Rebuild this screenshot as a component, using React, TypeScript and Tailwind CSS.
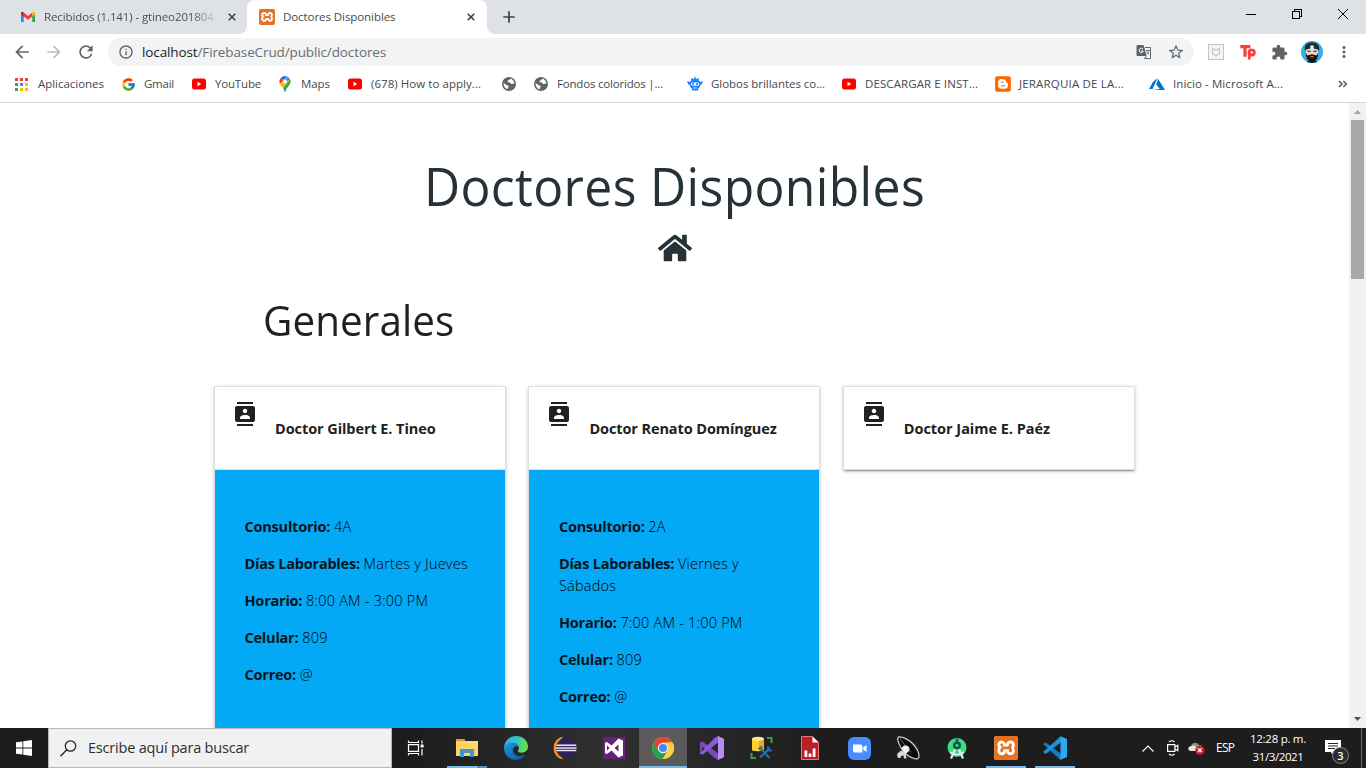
import type { ReactNode } from "react";
import { FaHome, FaBlogger } from "react-icons/fa";
import { FcGoogle } from "react-icons/fc";
import {
  MdArrowBack,
  MdArrowForward,
  MdContacts,
  MdExtension,
  MdInfoOutline,
  MdMoreVert,
  MdRefresh,
  MdStarBorder,
} from "react-icons/md";
import { SiXampp } from "react-icons/si";

/* ---------- Small brand marks ---------- */

function GmailIcon() {
  return (
    <svg width="16" height="16" viewBox="0 0 16 16">
      <path d="M1 4v9h2.8V7L1 4z" fill="#4285f4" />
      <path d="M15 4v9h-2.8V7L15 4z" fill="#34a853" />
      <path d="M12.2 3.6v4L15 5.5V4.2c0-1.5-1.6-1.9-2.8-.6z" fill="#fbbc04" />
      <path d="M3.8 3.6v4L1 5.5V4.2C1 2.7 2.6 2.3 3.8 3.600z" fill="#c5221f" />
      <path d="M3.8 3.6 8 6.9l4.2-3.3v4L8 10.8 3.8 7.600z" fill="#ea4335" />
    </svg>
  );
}

function XamppIcon({ className }: { className: string }) {
  return (
    <span className={`block rounded-[3px] bg-white text-[#e8701f] ${className}`}>
      <SiXampp className="block size-full" />
    </span>
  );
}

function YouTubeIcon() {
  return (
    <svg width="16" height="16" viewBox="0 0 16 16">
      <rect x="1" y="2.5" width="14" height="11" rx="2.5" fill="#f00" />
      <path d="M6.5 5.8v4.4L10.2 8z" fill="#fff" />
    </svg>
  );
}

function AppsIcon() {
  const colors = ["#ea4335", "#ea4335", "#ea4335", "#34a853", "#4285f4", "#fbbc04", "#34a853", "#fbbc04", "#fbbc04"];
  return (
    <svg width="13" height="13" viewBox="0 0 13 13">
      {colors.map((c, i) => (
        <rect key={i} x={(i % 3) * 5} y={Math.floor(i / 3) * 5} width="3" height="3" fill={c} />
      ))}
    </svg>
  );
}

function MapsIcon() {
  return (
    <svg width="16" height="16" viewBox="0 0 16 16">
      <path d="M8 0a5.600 5.600 0 0 0-4.300 2l3 2.600L10 .4A6 6 0 0 0 8 0z" fill="#1a73e8" />
      <path d="M3.700 2a5.700 5.700 0 0 0-.7 6.100l3.700-3.500z" fill="#ea4335" />
      <path d="M10 .4 6.200 7.200 8 8l4.900-5A5.700 5.700 0 0 0 10 .4z" fill="#4285f4" />
      <path d="M3 8.100c.8 1.700 2 2.500 3 4.100L13 3.100 10 5.400 6.200 7.400 6 4.900z" fill="#fbbc04" />
      <path d="M13 3.100c1.300 2.600.4 4.700-1 6.400C9.800 12 9.200 13 8.700 15c-.2 1.200-1.200 1.200-1.400 0-.2-1-.7-2-1.300-2.800z" fill="#34a853" />
      <circle cx="8" cy="5.500" r="2" fill="#fff" />
    </svg>
  );
}

function GlobeIcon() {
  return (
    <svg width="16" height="16" viewBox="0 0 16 16">
      <circle cx="8" cy="8" r="7" fill="#5f6368" />
      <path d="M8.500 2.500C9.500 4 8 4.300 6.800 4.700c-.8.300-.4 1.500.5 1.500 1.500 0 2 .3 2.400 1.200.4 1 1.800.5 3.800.2-.2-2.800-2.200-4.800-5-5.100zM2.600 7.200C2.300 9.700 4 12.600 6.800 13.300c-.3-1.300.6-1.700.8-2.600.2-1-.8-1.200-1.600-1.400C4.800 9 4.600 7.500 2.600 7.200z" fill="#fff" />
    </svg>
  );
}

function RobotIcon() {
  return (
    <svg width="16" height="16" viewBox="0 0 16 16">
      <path d="M8 .5 9.200 3 12 2l-.4 2.300A6.500 6.500 0 0 1 13 6l3-1-1.200 3.200L13.500 9c-.5 2-1.400 3-2.400 3.500L11 14.500H5l-.1-2C3.900 12 3 11 2.500 9l-1.300-.8L0 5l3 1a6.500 6.500 0 0 1 1.400-1.700L4 2l2.800 1z" fill="#1a80ff" />
      <rect x="3.800" y="6.500" width="8.400" height="3.200" rx="1.600" fill="#fff" />
      <circle cx="6" cy="8.100" r="1.100" fill="#1a80ff" />
      <circle cx="10" cy="8.100" r="1.100" fill="#1a80ff" />
      <path d="M6 12h4" stroke="#fff" strokeWidth=".8" />
    </svg>
  );
}

function BloggerIcon() {
  return (
    <span className="flex size-4 items-center justify-center rounded-[3px] bg-white text-[#ff6500]">
      <FaBlogger className="block size-[18px] shrink-0" />
    </span>
  );
}

function AzureIcon() {
  return (
    <svg width="16" height="16" viewBox="0 0 16 16">
      <path d="M8.600 2 3.900 6.100 0 13h3.600z" fill="#0072c6" />
      <path d="M9.200 3 7.200 8.500l3.700 4.500L3.700 14H16z" fill="#0072c6" />
    </svg>
  );
}

/* ---------- Browser chrome ---------- */

function CloseGlyph() {
  return (
    <svg width="8" height="8" viewBox="0 0 8 8" className="shrink-0">
      <path d="M.7.7l6.600 6.600M7.300.7.7 7.300" stroke="#3c4043" strokeWidth="1.600" />
    </svg>
  );
}

function TabStrip() {
  return (
    <div className="flex h-[34px] bg-[#dee1e6] text-[11.5px] text-[#45494d]">
      <div className="flex w-[247px] items-center pl-5">
        <GmailIcon />
        <span className="ml-2 w-[174px] overflow-hidden whitespace-nowrap bg-linear-to-r from-[#45494d] from-85% to-transparent bg-clip-text tracking-[-0.11px] text-transparent">
          Recibidos (1.141) - gtineo201804
        </span>
        <span className="ml-[10px]">
          <CloseGlyph />
        </span>
      </div>
      <div className="relative flex w-[240px] items-center rounded-t-lg bg-white pl-3">
        <svg width="8" height="8" viewBox="0 0 8 8" className="absolute bottom-0 -left-2">
          <path d="M8 0v8H0a8 8 0 0 0 8-8z" fill="#fff" />
        </svg>
        <svg width="8" height="8" viewBox="0 0 8 8" className="absolute -right-2 bottom-0">
          <path d="M0 0v8h8a8 8 0 0 1-8-8z" fill="#fff" />
        </svg>
        <XamppIcon className="size-4" />
        <span className="ml-2 w-[184px] whitespace-nowrap tracking-[-0.07px]">Doctores Disponibles</span>
        <CloseGlyph />
      </div>
      <div className="flex flex-1 items-center pl-[16px]">
        <svg width="12" height="12" viewBox="0 0 12 12">
          <path d="M6 .3v11.400M.3 6h11.400" stroke="#3c4043" strokeWidth="1.700" />
        </svg>
      </div>
      <div className="flex items-start gap-[36px] pt-[9px] pr-[18px]">
        <svg width="10" height="10" viewBox="0 0 10 10" shapeRendering="crispEdges">
          <path d="M0 5.500h10" stroke="#000" />
        </svg>
        <svg width="10" height="10" viewBox="0 0 10 10" fill="none" stroke="#000" shapeRendering="crispEdges">
          <path d="M.5 2.500h7v7h-7z" />
          <path d="M2.500 2.500v-2h7v7h-2" />
        </svg>
        <svg width="10" height="10" viewBox="0 0 10 10">
          <path d="M0 0l10 10M10 0 0 10" stroke="#000" />
        </svg>
      </div>
    </div>
  );
}

function TranslateIcon() {
  return (
    <svg width="16" height="16" viewBox="0 0 16 16">
      <path d="M1.500 1h6l3.500 11H1.500A1 1 0 0 1 .5 11V2a1 1 0 0 1 1-1z" fill="#5f6368" />
      <path d="M7 5.200A2.100 2.100 0 1 0 7.300 7H5.200" fill="none" stroke="#fff" strokeWidth="1" />
      <path d="M9 3.500h5.500v11H8.500l2-2.500" fill="#fff" stroke="#5f6368" />
      <path d="M9.800 6.500h4M11.800 5.500v1M13 6.500c-.3 1.800-1.200 3.200-2.500 4.200M10.600 7.500c.6 1.200 1.500 2.300 2.800 3.200" fill="none" stroke="#5f6368" strokeWidth=".9" />
    </svg>
  );
}

function ShieldExtension() {
  return (
    <svg width="16" height="16" viewBox="0 0 16 16">
      <rect x=".5" y=".5" width="15" height="15" fill="#f4f5f6" stroke="#bfc3c8" />
      <path d="M4.500 4.500 8 6l3.500-1.500v5L8 12l-3.500-2.500z" fill="none" stroke="#c3c7cb" strokeWidth="1.300" />
    </svg>
  );
}

function TpExtension() {
  return (
    <svg width="16" height="16" viewBox="0 0 16 16" fill="none" stroke="#f8403c" strokeWidth="3.200">
      <path d="M.3 2.700h10M5 2.700v10" />
      <circle cx="11.700" cy="8.500" r="2.600" strokeWidth="2.900" />
      <path d="M9.200 7v8.500" strokeWidth="2.700" />
    </svg>
  );
}

function Avatar() {
  return (
    <svg width="22" height="22" viewBox="0 0 22 22">
      <defs>
        <clipPath id="avatar">
          <circle cx="11" cy="11" r="11" />
        </clipPath>
      </defs>
      <g clipPath="url(#avatar)">
        <rect width="22" height="22" fill="#31b0e6" />
        <path d="M5 22c1-2 3-3 6-3s5 1 6 3z" fill="#222" />
        <path d="M4.800 8h12.400l-.3 8L11 20l-5.900-4z" fill="#edd0bf" />
        <path d="M3.800 9.500C3 4 6 1.300 11 1.300s8 2.700 7.200 8.200L16.500 8.500 11 6.800 5.500 8.500z" fill="#262a31" />
        <path d="M9.300 4.500h3.400V9H9.300z" fill="#f5ebe4" />
        <path d="M4.800 11.500c.4 2.200 1.600 3 2.700 2.800l3.500-1 3.500 1c1.100.2 2.300-.6 2.700-2.800.3 6-2.700 9.300-6.200 9.300s-6.500-3.300-6.200-9.300z" fill="#1b1512" />
        <path d="M6.500 10.200h3M12.500 10.200h3" stroke="#222" strokeWidth="1.100" />
        <path d="M9.500 15.700h3" stroke="#d99" strokeWidth="1" />
      </g>
    </svg>
  );
}

function Toolbar() {
  return (
    <div className="flex h-[34px] items-center pt-[2px] text-[#5f6368]">
      <div className="flex w-[108px] items-center gap-[12px] pl-3">
        <MdArrowBack className="size-5" />
        <MdArrowForward className="size-5 text-[#babcbe]" />
        <MdRefresh className="size-5" />
      </div>
      <div className="flex h-7 w-[1086px] items-center rounded-full bg-[#f1f3f4] pr-[9px] pl-[10px]">
        <MdInfoOutline className="size-4" />
        <span className="ml-2 flex-1 text-[13.5px] tracking-[-0.12px] text-[#6a6d71]">
          <span className="text-[#202124]">localhost</span>/FirebaseCrud/public/doctores
        </span>
        <TranslateIcon />
        <MdStarBorder className="ml-[15px] size-[18px]" />
      </div>
      <div className="flex items-center pl-[14px]">
        <ShieldExtension />
        <span className="ml-4">
          <TpExtension />
        </span>
        <MdExtension className="ml-[15px] size-[17px]" />
        <span className="ml-[13px]">
          <Avatar />
        </span>
        <MdMoreVert className="ml-3 size-[18px]" />
      </div>
    </div>
  );
}

function Bookmark({ icon, label, className }: { icon: ReactNode; label?: string; className: string }) {
  return (
    <div className={`flex shrink-0 items-center whitespace-nowrap ${className}`}>
      <span className="flex w-4 shrink-0 justify-center">{icon}</span>
      {label && <span>{label}</span>}
    </div>
  );
}

function BookmarksBar() {
  return (
    <div className="flex h-[35px] items-center border-b border-[#d5d6d8] pb-[2px] pl-[13px] text-[11.5px] text-[#45494d]">
      <Bookmark className="w-[107px] gap-[9px] tracking-[-0.03px]" icon={<AppsIcon />} label="Aplicaciones" />
      <Bookmark className="w-[71px] gap-2 tracking-[-0.24px]" icon={<FcGoogle className="size-[15px]" />} label="Gmail" />
      <Bookmark className="w-[86px] gap-2 tracking-[-0.18px]" icon={<YouTubeIcon />} label="YouTube" />
      <Bookmark className="w-[70px] gap-2 tracking-[-0.06px]" icon={<MapsIcon />} label="Maps" />
      <Bookmark className="w-[154px] gap-2 tracking-[0.05px]" icon={<YouTubeIcon />} label="(678) How to apply..." />
      <Bookmark className="w-[32px]" icon={<GlobeIcon />} />
      <Bookmark className="w-[154px] gap-2 tracking-[-0.19px]" icon={<GlobeIcon />} label="Fondos coloridos |..." />
      <Bookmark className="w-[154px] gap-2 tracking-[-0.04px]" icon={<RobotIcon />} label="Globos brillantes co..." />
      <Bookmark className="w-[154px] gap-2 tracking-[0.09px]" icon={<YouTubeIcon />} label="DESCARGAR E INST..." />
      <Bookmark className="w-[154px] gap-2 tracking-[0.18px]" icon={<BloggerIcon />} label="JERARQUIA DE LA..." />
      <Bookmark className="w-[189px] gap-2 tracking-[0.08px]" icon={<AzureIcon />} label="Inicio - Microsoft A..." />
      <svg width="10" height="8" viewBox="0 0 10 8" fill="none" stroke="#5f6368" strokeWidth="1.700">
        <path d="M1 1 4 4 1 7M5.300 1l3 3-3 3" />
      </svg>
    </div>
  );
}

/* ---------- Page ---------- */

type Doctor = { name: string; tracking: string; details?: [string, string][] };

const doctors: Doctor[] = [
  {
    name: "Doctor Gilbert E. Tineo",
    tracking: "tracking-[-0.08px]",
    details: [
      ["Consultorio:", "4A"],
      ["Días Laborables:", "Martes y Jueves"],
      ["Horario:", "8:00 AM - 3:00 PM"],
      ["Celular:", "809"],
      ["Correo:", "@"],
    ],
  },
  {
    name: "Doctor Renato Domínguez",
    tracking: "tracking-[-0.1px]",
    details: [
      ["Consultorio:", "2A"],
      ["Días Laborables:", "Viernes y Sábados"],
      ["Horario:", "7:00 AM - 1:00 PM"],
      ["Celular:", "809"],
      ["Correo:", "@"],
    ],
  },
  { name: "Doctor Jaime E. Paéz", tracking: "tracking-[-0.03px]" },
];

function DoctorCard({ doctor }: { doctor: Doctor }) {
  return (
    <article className="w-[292px] shrink-0 border border-[#ddd] bg-white shadow-[0_2px_2px_rgba(0,0,0,0.14),0_3px_1px_-2px_rgba(0,0,0,0.2),0_1px_5px_rgba(0,0,0,0.12)]">
      <header className="flex h-[82px] items-start pt-[15px] pl-[18px] text-[#212121]">
        <MdContacts className="size-6" />
        <h3 className={`mt-[16px] ml-[18px] text-[14.5px] leading-[22px] font-bold ${doctor.tracking}`}>
          {doctor.name}
        </h3>
      </header>
      {doctor.details && (
        <div className="flex h-[400px] flex-col gap-[15px] border-t border-[#ddd] bg-[#03a9f4] px-[29.5px] pt-[46px] text-[14.5px] leading-[22px] text-[#06141c]">
          {doctor.details.map(([label, value]) => (
            <p key={label}>
              <strong className="font-bold tracking-[-0.22px]">{label}</strong>{" "}
              <span className="font-light tracking-[0.21px] text-black">{value}</span>
            </p>
          ))}
        </div>
      )}
    </article>
  );
}

function Scrollbar() {
  return (
    <div className="flex w-[17px] flex-col items-center bg-[#f1f1f1]">
      <svg width="17" height="17" viewBox="0 0 17 17">
        <path d="M5 11h7L8.500 7z" fill="#a3a3a3" />
      </svg>
      <div className="h-[159px] w-[13px] bg-[#a8a8a8]" />
      <svg width="17" height="17" viewBox="0 0 17 17" className="mt-auto">
        <path d="M5 6h7l-3.500 4z" fill="#505050" />
      </svg>
    </div>
  );
}

function Page() {
  return (
    <div className="flex min-h-0 flex-1 bg-white">
      <main className="flex-1 overflow-hidden">
        <h1 className="scale-x-94 pt-[55px] text-center text-[53px] leading-[56px] tracking-[0.4px] text-[#263238]">
          Doctores Disponibles
        </h1>
        <FaHome className="mx-auto mt-[17px] size-[34px] text-[#263238]" />
        <h2 className="ml-[263px] origin-left scale-x-95 pt-[27px] text-[42.5px] leading-[56px] tracking-[0.1px] text-[#212121]">
          Generales
        </h2>
        <section className="mt-[38px] flex items-start gap-[22.4px] pl-[214px]">
          {doctors.map((d) => (
            <DoctorCard key={d.name} doctor={d} />
          ))}
        </section>
      </main>
      <Scrollbar />
    </div>
  );
}

/* ---------- Windows taskbar ---------- */

function TaskCell({ children, active, bar }: { children: ReactNode; active?: boolean; bar?: ReactNode }) {
  return (
    <div className={`flex w-12 shrink-0 flex-col items-center ${active ? "bg-[#5a5a5a]" : ""}`}>
      <div className="flex h-[38px] items-center pt-[2px]">{children}</div>
      {active && <div className="h-[2px] w-full bg-[#76b9ed]" />}
      {bar}
    </div>
  );
}

function RunningBar({ stacked }: { stacked?: boolean }) {
  return (
    <div className="flex h-[2px] w-10">
      <div className="flex-1 bg-[#76b9ed]" />
      {stacked && <div className="w-[9px] border-l border-[#3c5468] bg-[#5f8fb4]" />}
    </div>
  );
}

function TaskViewIcon() {
  return (
    <svg width="18" height="16" viewBox="0 0 18 16" fill="none" stroke="#fff" strokeWidth="1.200">
      <path d="M1.500.5v2h10v-2M1.500 15.500v-2h10v2M1.500 4.700h10v6.600h-10zM15 .5v3M15 9v6.500" />
      <path d="M13.600 4.500h3v3h-3z" fill="#fff" stroke="none" />
    </svg>
  );
}

function ExplorerIcon() {
  return (
    <svg width="22" height="20" viewBox="0 0 22 20">
      <path d="M0 1h8l1.500 2H22v15H0z" fill="#ffd35c" />
      <path d="M0 1h8l1 2.200H0z" fill="#e5a00d" />
      <path d="M0 4h22v1H0z" fill="#ffe08a" />
      <path d="M4 19v-8h14v8h-4v-4H8v4z" fill="#3f95d3" />
    </svg>
  );
}

function EdgeIcon() {
  return (
    <svg width="24" height="24" viewBox="0 0 24 24">
      <defs>
        <linearGradient id="edgeTop" x1="0" y1="0" x2="1" y2="0.300">
          <stop offset="0" stopColor="#2fb0e8" />
          <stop offset=".55" stopColor="#35c4c5" />
          <stop offset="1" stopColor="#62e04f" />
        </linearGradient>
        <linearGradient id="edgeBottom" x1="0" y1="0" x2="1" y2="1">
          <stop offset="0" stopColor="#1b9de2" />
          <stop offset="1" stopColor="#0c4f9e" />
        </linearGradient>
      </defs>
      <path d="M.2 10C1.500 4 6.200 0 12 0c7 0 12 4.800 12 10.500 0 4-3 6.200-6.300 6.200-2.300 0-3.800-.8-3.800-1.700 0-.6 1-1 1-3 0-2.500-2.300-4.500-5.200-4.500C5 7.500 1.500 9 .2 12.500z" fill="url(#edgeTop)" />
      <path d="M.1 12C.8 8.500 4.500 6.300 8.600 6.500c3.600.1 6.200 2.500 6.300 5-1.500-2-5.500-1.500-6 2C8.400 18 13 22.500 21.500 18.300 19.500 21.800 16 24 12 24 5.400 24 0 18.700.1 12z" fill="url(#edgeBottom)" />
    </svg>
  );
}

function EclipseIcon() {
  return (
    <svg width="24" height="22" viewBox="0 0 24 22">
      <path d="M9.500.3A11 11 0 0 0 9.500 21.700 13 13 0 0 1 9.500.3z" fill="#f7941e" stroke="#f7941e" strokeWidth="1.200" />
      <circle cx="13.300" cy="11" r="10.300" fill="#2c2255" />
      <path d="M3.500 8.300h19.800M3 11h20.600M3.500 13.600h19.800" stroke="#e9e7f2" strokeWidth="1.500" />
    </svg>
  );
}

function VisualStudioClassicIcon() {
  return (
    <svg width="22" height="22" viewBox="0 0 22 22">
      <rect width="22" height="22" fill="#68217a" />
      <path d="M15.500 1.500 20 3.400v15.200l-4.500 1.900-7-7-4.500 3.500-2-1V6l2-1 4.500 3.500zm0 6L11.500 11l4 3.500zM4 8.300v5.400L6.500 11z" fill="#fff" fillRule="evenodd" />
    </svg>
  );
}

function ChromeIcon() {
  return (
    <svg width="22" height="22" viewBox="0 0 22 22">
      <circle cx="11" cy="11" r="11" fill="#fbc116" />
      <path d="M1.500 5.500A11 11 0 0 1 20.500 5.500H11L6.200 13.700z" fill="#dd4437" />
      <path d="M1.500 5.500a11 11 0 0 0 9 16.500l5.300-8.300H6.200z" fill="#1ea15d" />
      <path d="M20.500 5.500A11 11 0 0 1 10.500 22l5.300-8.300L14.500 5.500z" fill="#fdcd42" />
      <circle cx="11" cy="11" r="5.200" fill="#f3f3f3" />
      <circle cx="11" cy="11" r="4.100" fill="#4788f4" />
    </svg>
  );
}

function VisualStudioIcon() {
  return (
    <svg width="24" height="24" viewBox="0 0 24 24">
      <path d="M0 6.500 2.500 5.200 18 17.500V24L14.500 22 2.500 10.800 1.600 15.800 2.500 18.700 0 17.500z" fill="#7b48c0" />
      <path d="M2.500 18.700 18 6.500V0l-3.500 2L0 17.500z" fill="#9058d8" />
      <path d="M18 0l6 2.800v18.400L18 24z" fill="#b78cf4" />
    </svg>
  );
}

function DatabaseToolsIcon() {
  return (
    <svg width="23" height="24" viewBox="0 0 23 24">
      <path d="M17 2h4.500v5M1.500 17v5H6" fill="none" stroke="#3e9b43" strokeWidth="2.200" />
      <path d="M2 2.500v11.500c0 1.600 12 1.600 12 0V2.500z" fill="#fccf35" />
      <path d="M9 3v12c3 0 5-.4 5-1.200V3z" fill="#f0a51c" />
      <ellipse cx="8" cy="2.800" rx="6" ry="2.100" fill="#ffe492" />
      <path d="M10 21.500 20 12M10.500 12.500l9 9.500" stroke="#1c6db3" strokeWidth="2.200" />
      <path d="m8.500 13 3.500-2.500M18 10.500v4h4" stroke="#1c6db3" strokeWidth="2" fill="none" />
    </svg>
  );
}

function ReportIcon() {
  return (
    <svg width="18" height="24" viewBox="0 0 18 24">
      <path d="M.5.5h11l6 6v17H.5z" fill="#b91f25" stroke="#e0777a" />
      <path d="M11.500.5v6h6z" fill="#fff" />
      <path d="M3.500 14.500h2.800V21H3.500zM7.600 17.500h2.800V21H7.600zM11.700 12.500h2.800V21h-2.800z" fill="#fff" />
    </svg>
  );
}

function ZoomIcon() {
  return (
    <svg width="23" height="23" viewBox="0 0 23 23">
      <rect width="23" height="23" rx="6" fill="#4a8cff" />
      <path d="M5 7.500h7.500a2 2 0 0 1 2 2v6H7a2 2 0 0 1-2-2zM15.300 10.200l3.200-2.300v7.200l-3.200-2.300z" fill="#fff" />
    </svg>
  );
}

function SpeakerIcon() {
  return (
    <svg width="24" height="24" viewBox="0 0 24 24">
      <path d="M2.500 1C6 .5 13 3 18 9s6 12 4 13.500S12 21 8 16 0 3 2.500 1z" fill="#0c0c0c" stroke="#c9c9c9" strokeWidth="1.300" />
      <path d="M4 2.500c3 4 6 9 11 14" stroke="#6d6d6d" strokeWidth="1" fill="none" />
      <path d="M5.500 12.500c1-2.500 3.500-3.500 6-2.500s2.500 4.500.5 6l-3 2z" fill="#f4f4f4" />
      <path d="M1 18l4-3.500 4.500 2.500 1 5.500H8l-.5-3-2.500.5-.5 2H2z" fill="#d8d8d8" />
    </svg>
  );
}

function AndroidStudioIcon() {
  return (
    <svg width="22" height="22" viewBox="0 0 22 22">
      <circle cx="11" cy="10.500" r="9.500" fill="#3ddc84" />
      <path d="M4.500 15c4 3.200 9 3.200 13 0" stroke="#fff" strokeWidth="1.400" fill="none" />
      <path d="M10 10.500 5 21.500M12 10.500l5 11" stroke="#dfe9ee" strokeWidth="2.200" />
      <path d="M11 2v4" stroke="#0e5a44" strokeWidth="2.400" />
      <circle cx="11" cy="8.500" r="4" fill="#0e5a44" />
      <circle cx="11" cy="8.500" r="1.400" fill="#3ddc84" />
    </svg>
  );
}

function VsCodeIcon() {
  return (
    <svg width="24" height="24" viewBox="0 0 24 24">
      <path d="M0 8 2.500 6.200 18 17.800V24l-.8-.3z" fill="#0f7cc4" />
      <path d="M18 0v6.300L2.500 17.900 0 16z" fill="#1b92dc" />
      <path d="M17.500.2 24 3v18l-6.500 2.800z" fill="#2da8f0" />
    </svg>
  );
}

function Tray() {
  return (
    <div className="ml-auto flex h-full items-center text-white">
      <svg width="12" height="7" viewBox="0 0 12 7" fill="none" stroke="#fff" strokeWidth="1.200">
        <path d="M.5 6.500 6 1l5.500 5.500" />
      </svg>
      <svg width="12" height="16" viewBox="0 0 12 16" fill="none" stroke="#fff" strokeWidth="1.200" className="ml-[13px]">
        <path d="M.6 4.600h7.300v6.800H.6zM8 7l2.800-1.700v5.400L8 9M2 2C3.500.5 6 .5 7.500 2M2 14c1.500 1.500 4 1.500 5.500 0" />
      </svg>
      <svg width="17" height="14" viewBox="0 0 17 14" className="ml-[9px]">
        <path d="M3 9.500C-.5 9.500-.5 5 3 5 4 1.500 9 .5 11 4c3.500-.5 4.500 4.500 1 5.500z" fill="#8d8d8d" />
        <path d="M3 10C-.5 10-.5 5.500 3 5.500c2-2 6-1 7 4.500z" fill="#e3e3e3" />
        <circle cx="11.800" cy="9.200" r="4.600" fill="#d8202b" />
        <path d="M10 7.400l3.600 3.600M13.600 7.400 10 11" stroke="#fff" strokeWidth="1.300" />
      </svg>
      <span className="ml-[11px] w-[20px] text-[12px] tracking-[-0.7px]">ESP</span>
      <div className="ml-[13px] flex w-[58px] flex-col items-center text-[11.5px] leading-[18px] whitespace-nowrap">
        <span className="tracking-[-0.28px]">12:28 p. m.</span>
        <span className="tracking-[-0.39px]">31/3/2021</span>
      </div>
      <div className="relative ml-[18px] h-6 w-[25px]">
        <svg width="16" height="16" viewBox="0 0 16 16" className="mt-[4px]">
          <path d="M0 0h16v12H9v3.500L5.500 12H0z" fill="#fff" />
          <path d="M3 3.500h10M3 6h10M3 8.500h7" stroke="#222" />
        </svg>
        <span className="absolute top-[11px] left-[7px] flex size-[17px] items-center justify-center rounded-full border border-[#8a8a8a] bg-[#2b2b2b] text-[11px] leading-none font-semibold">
          3
        </span>
      </div>
      <div className="ml-[11px] h-full w-px bg-[#6b6b6b]" />
      <div className="w-[4px]" />
    </div>
  );
}

function Taskbar() {
  return (
    <div className="flex h-10 shrink-0 bg-[#1f1f1f] bg-linear-to-r from-[#1c1c1c] from-30% via-[#2f302f] via-45% to-[#1d1d1e] to-60%">
      <div className="flex w-12 items-center justify-center">
        <svg width="16" height="16" viewBox="0 0 16 16" fill="#fff">
          <path d="M0 2.300 6.500 1.400v6.100H0zM7.300 1.300 16 0v7.500H7.300zM0 8.400h6.500v6.200L0 13.700zM7.300 8.400H16V16l-8.700-1.300z" />
        </svg>
      </div>
      <div className="flex w-[344px] items-center border border-[#b9b9b9] bg-[#f1f1f1] pl-[11px]">
        <svg width="17" height="17" viewBox="0 0 17 17" fill="none" stroke="#222" strokeWidth="1.300">
          <circle cx="10.500" cy="6" r="5.200" />
          <path d="M6.800 9.700.5 16.300" />
        </svg>
        <span className="ml-[11px] text-[14.5px] tracking-[-0.2px] text-[#2e2e2e]">Escribe aquí para buscar</span>
      </div>
      <TaskCell>
        <TaskViewIcon />
      </TaskCell>
      <div className="ml-[3px] flex gap-px">
        <TaskCell bar={<RunningBar stacked />}>
          <ExplorerIcon />
        </TaskCell>
        <TaskCell>
          <EdgeIcon />
        </TaskCell>
        <TaskCell>
          <EclipseIcon />
        </TaskCell>
        <TaskCell>
          <VisualStudioClassicIcon />
        </TaskCell>
        <TaskCell active>
          <ChromeIcon />
        </TaskCell>
        <TaskCell>
          <VisualStudioIcon />
        </TaskCell>
        <TaskCell>
          <DatabaseToolsIcon />
        </TaskCell>
        <TaskCell>
          <ReportIcon />
        </TaskCell>
        <TaskCell>
          <ZoomIcon />
        </TaskCell>
        <TaskCell>
          <SpeakerIcon />
        </TaskCell>
        <TaskCell>
          <AndroidStudioIcon />
        </TaskCell>
        <TaskCell bar={<RunningBar />}>
          <XamppIcon className="size-6" />
        </TaskCell>
        <TaskCell bar={<RunningBar />}>
          <VsCodeIcon />
        </TaskCell>
      </div>
      <Tray />
    </div>
  );
}

export default function App() {
  return (
    <div className="flex h-[768px] w-[1366px] flex-col overflow-hidden bg-white font-['Open_Sans','Noto_Sans',sans-serif]">
      <TabStrip />
      <Toolbar />
      <BookmarksBar />
      <Page />
      <Taskbar />
    </div>
  );
}
